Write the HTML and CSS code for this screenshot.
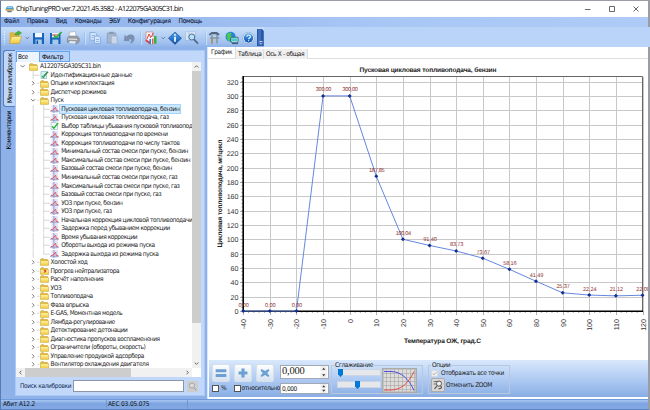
FILE: index.html
```html
<!DOCTYPE html>
<html lang="ru">
<head>
<meta charset="utf-8">
<title>ChipTuningPRO</title>
<link rel="stylesheet" href="styles.css">
</head>
<body>
<svg class="defs" aria-hidden="true">
  <defs>
    <linearGradient id="gold" x1="0" y1="0" x2="0" y2="1"><stop offset="0" stop-color="#fff3a0"/><stop offset="1" stop-color="#f0c83c"/></linearGradient>
    <linearGradient id="sky" x1="0" y1="0" x2="0" y2="1"><stop offset="0" stop-color="#4aa6ee"/><stop offset="1" stop-color="#0b4fb0"/></linearGradient>
    <symbol id="folder" viewBox="0 0 9 8"><path d="M.5 7.3V1.4L1.2.7h2.4l.8.9h3.2v1.2h.9v4.5z" fill="#e5bc43" stroke="#b9912c" stroke-width=".5"/><path d="M.7 7.2V3.1h7.7v4.1z" fill="url(#gold)"/></symbol>
    <symbol id="mark" viewBox="0 0 9 8"><use href="#folder" width="9" height="8"/><path d="M4 3.2l2 2M6 3l-2 2.5" stroke="#e03a28" stroke-width="1.1"/></symbol>
    <symbol id="curve" viewBox="0 0 9 8"><path d="M1.5 0h6.5v8H1.5z" fill="#e3e4f8"/><path d="M3.9 0v8M0 6.2h9" stroke="#8d94c4" stroke-width=".9"/><path d="M1 5.5l2-.3L5.6 2.2l.6 3.1 2 .4" fill="none" stroke="#e0505c" stroke-width=".9"/></symbol>
    <symbol id="check" viewBox="0 0 9 8"><path d="M1 .5h5l1.5 1.4v5.6H1z" fill="#f2f9fc" stroke="#90b2be" stroke-width=".6"/><path d="M2 4.3l1.9 2L8.1 1" fill="none" stroke="#26b33c" stroke-width="1.4"/></symbol>
    <symbol id="note" viewBox="0 0 9 8"><path d="M1 .5h5.5v7H1z" fill="#d9f1f8" stroke="#72aebb" stroke-width=".6"/><path d="M2 5l1.5 1.5L4.7 4" fill="none" stroke="#28a84c" stroke-width="1.2"/><path d="M4 5L8 .7" stroke="#3b8b46" stroke-width="1.6"/></symbol>
  </defs>
</svg>
<div class="window">
  <header class="title">
    <svg class="logo" viewBox="0 0 10 8"><path d="M1 3L3 .6h5L9.6 3v2.7H.8z" fill="#479bd2"/><path d="M2.4 2.6l1-1.3h4l1 1.3z" fill="#b8e2f5"/><path d="M.6 4.2h9v1.5h-9z" fill="#ecb63e"/><path d="M2 6h6l-1 1.5H3z" fill="#777"/></svg>
    <span class="caption">ChipTuningPRO ver.7.2021.45.3582 - A122075GA305C31.bin</span>
    <svg class="controls" viewBox="0 0 56 8"><path d="M1 4.5h5.5M25.5 1.5h5v5h-5zM49.5 1.5l5 5M54.5 1.5l-5 5" fill="none" stroke="#444" stroke-width=".8"/></svg>
  </header>
  <nav class="menu"><span>Файл</span><span>Правка</span><span>Вид</span><span>Команды</span><span>ЭБУ</span><span>Конфигурация</span><span>Помощь</span></nav>
  <div class="toolbar">
    <svg class="tools" viewBox="0 0 265 20">
      <path d="M4.5 3.5v13" stroke="#eff6ff" stroke-dasharray="1 1.5"/>
      <path d="M9.5 14.5V5.3l1-1h3.4l1.3 1.5H19v8.7z" fill="#e0b33d"/><path d="M9.5 15.5l2-7h10l-2.2 7z" fill="url(#gold)" stroke="#ba922b" stroke-width=".5"/><path d="M15 6.8c.2-2 1-2.8 3.2-2.8V2.7L21.5 5l-3.3 2.5V6.2c-1 0-1.6.3-1.6 1z" fill="#49b43a" stroke="#278625" stroke-width=".4"/>
      <path d="M25.7 9.2l1.6 1.6 1.6-1.6" fill="none" stroke="#56657e" stroke-width=".8"/>
      <path d="M33 5h11v11H33z" fill="#1464c0"/><path d="M35 5h7v4.3h-7z" fill="#f5faff"/><path d="M35.5 11.5h6.3V16h-6.3z" fill="#a7cbe9"/><path d="M36.5 12.5h1.6V16h-1.6z" fill="#1456a6"/>
      <path d="M50 5h10.5v11H50z" fill="#1464c0"/><path d="M52 5h6.8v4.4H52z" fill="#f8eeee"/><path d="M52.4 11.6h6V16h-6z" fill="#a7cbe9"/><path d="M52 7h6" stroke="#d24848"/><path d="M54 7.2l2 2.6L61.6 4" fill="none" stroke="#28ac32" stroke-width="1.6"/>
      <path d="M69.3 9V4.3l6-.8 1 5.5z" fill="#fff" stroke="#9399a2" stroke-width=".5"/><path d="M67.4 10l2-2h7.8l2 2.2v3.6l-2.5 2-9.3-1.5z" fill="#999da6" stroke="#70757e" stroke-width=".5"/><path d="M68 11l9 .4" stroke="#ececf0"/><path d="M70 13l6 .5-1 2.2-6-.7z" fill="#e4edf6"/>
      <path d="M85 3v14M141 3v14M206 3v14" stroke="#7faae0" stroke-width=".6"/><path d="M85.6 3v14M141.6 3v14M206.6 3v14" stroke="#eef6ff" stroke-width=".6"/>
      <g fill="#d7e7fb" stroke="#78a2da" stroke-width=".8"><path d="M90 4.5h5l1.7 1.7v6H90z"/><path d="M94.4 8h4.2l1.8 1.8v5.7h-6z"/></g><path d="M91.5 7.5h3.5M91.5 9.5h2M96 11.5h3M96 13.5h3" stroke="#82a9dd" stroke-width=".8"/>
      <path d="M107.3 5h8.5v10h-8.5z" fill="#a5b7ce" stroke="#8797b1" stroke-width=".7"/><path d="M109.3 3.8h4.4v2.1h-4.4z" fill="#8797ad"/><path d="M111.3 8h5.8v7.8h-5.8z" fill="#cbd8ea" stroke="#8da3c4" stroke-width=".5"/>
      <path d="M124 13l.6-6.3 2 1.9c3.3-3.6 8.4-2 7.9 2.1-.3 2.8-2.2 4.6-4.8 4.9 3-3.3 1.4-5.6-1-3.6l1.6 1.2z" fill="#7b8fae"/>
      <path d="M146 4h7v9.5h-7z" fill="#faf4f5" stroke="#cb6e74" stroke-width=".6"/><path d="M147 11l2-5 2 4 2-5" fill="none" stroke="#dd3f41"/><path d="M146 12l4 3.5h3" fill="none" stroke="#e33d3b" stroke-width="1.7"/><path d="M151 9h2.8v7H151z" fill="#fff"/><path d="M152.2 10.4h1.2V16h-1.2z" fill="#da3232"/><path d="M154 8h2.5v7.8H154z" fill="#36b33c"/><path d="M149.4 11h1.7v4.8h-1.7z" fill="#2d83d0"/>
      <path d="M161.6 9.2l1.6 1.6 1.6-1.6" fill="none" stroke="#56657e" stroke-width=".8"/>
      <path d="M175 4l6.5 6.2-6.5 6.2-6.5-6.2z" fill="url(#sky)" stroke="#1a437a" stroke-width=".6"/><path d="M175 6.2v1.6M175 8.8v5" stroke="#fff" stroke-width="1.7"/>
      <path d="M185.5 4h10v8h-10z" fill="#eef5fc" stroke="#8aabd2" stroke-width=".5"/><path d="M186 6h9M186 8h9M186 10h9M189 4v8" stroke="#91b0d2" stroke-width=".5"/><circle cx="191.8" cy="9" r="3" fill="#bce2f8" stroke="#49719f" stroke-width="1"/><path d="M194 11.4l4 4.3" stroke="#50688a" stroke-width="1.8"/>
      <path d="M208.7 6.3l3-2.2h5.2l2.8 2.2-1.3 1.2-2.5-1.3h-4l-2.2 1.4z" fill="#50657c"/><path d="M210 10h9.5M212 7v8.5M217 7v8.5" stroke="#8494a4" stroke-width="1.5"/><path d="M212 10v5.5" stroke="#c18a45" stroke-width="1.5"/>
      <circle cx="230.6" cy="8.8" r="5" fill="#2684d8"/><path d="M226.5 7l2.3-2.6 3 .8-1.2 2.2 2.2 1.8-2.7 1.6-.4 2.5-2-.5z" fill="#4cc951"/><path d="M231 9.3h7v5h-7z" fill="#e0f6f7" stroke="#245275" stroke-width=".8"/><path d="M232 10.3h5v3h-5z" fill="#3ed1c4"/><path d="M232 15.6h6" stroke="#35536e"/>
      <circle cx="248.5" cy="10" r="5.7" fill="#fff" stroke="#6f99c4" stroke-width=".6"/><circle cx="248.5" cy="10" r="4.7" fill="url(#sky)"/><path d="M246.8 8.8c0-2.5 3.6-2.3 3.6-.1 0 1.4-1.8 1.3-1.8 2.6M248.6 12.2v1.1" fill="none" stroke="#fff" stroke-width="1.1"/>
      <path d="M257 1h5l1.8 2v15H257z" fill="#2a58a8"/><path d="M258 1h3v16h-3z" fill="#416fc0"/><path d="M259.5 13.5h3M259.8 15l1.3 1.2 1.3-1.2" fill="none" stroke="#fff" stroke-width=".7"/>
    </svg>
  </div>
  <main class="workspace">
    <aside class="side">
      <div class="rail"><div class="rtab on"><span>Меню калибровок</span></div><div class="rtab"><span>Комментарии</span></div></div>
      <section class="panel">
        <div class="ptabs"><span>Все</span><span class="sel">Фильтр</span></div>
        <div class="treebox">
          <div class="treerow"><div class="tree" id="tree"></div>
            <div class="vbar"><svg viewBox="0 0 9 9"><path d="M2.7 5.5l1.8-1.8 1.8 1.8"/></svg><i></i><svg viewBox="0 0 9 9"><path d="M2.7 3.5l1.8 1.8 1.8-1.8"/></svg></div>
          </div>
          <div class="hbar"><svg viewBox="0 0 9 9"><path d="M5.5 2.7L3.7 4.5l1.8 1.8"/></svg><i></i><svg viewBox="0 0 9 9"><path d="M3.5 2.7l1.8 1.8-1.8 1.8"/></svg></div>
        </div>
        <div class="search"><label>Поиск калибровки</label><div class="input"></div><div class="find"><svg viewBox="0 0 11 11"><circle cx="5" cy="4.6" r="2.5" fill="#ddd" stroke="#999" stroke-width=".8"/><path d="M6.8 6.5l2.4 2.8" stroke="#999"/></svg></div></div>
      </section>
    </aside>
    <section class="content">
      <div class="ctabs"><span class="on">График</span><span>Таблица</span><span class="axis">Ось X - общая</span></div>
      <svg class="chart" id="chart" viewBox="207 60 441 300"></svg>
      <div class="editor">
        <div class="ops">
          <div class="btns">
            <div class="op"><svg viewBox="0 0 18 18"><path d="M3 4.8h12v3.4H3zM3 10.2h12v3.4H3z"/></svg></div>
            <div class="op"><svg viewBox="0 0 18 18"><path d="M7.2 4h3.6v3.4H14v3.4h-3.2V14H7.2v-3.2H4V7.4h3.2z"/></svg></div>
            <div class="op"><svg viewBox="0 0 18 18"><path d="M5 4.5l4 2.3 4-2.3 1 1.6L11.5 9l2.5 3-1 1.6-4-2.3-4 2.3L4 12l2.5-3L4 6.1z"/></svg></div>
          </div>
          <div class="checks"><i class="box"></i><span class="pct">%</span><i class="box"></i><span class="rel">относительно</span></div>
        </div>
        <div class="spins">
          <div class="spin big"><span>0,000</span><svg viewBox="0 0 8 13"><path d="M0 0h7v6H0zM0 7h7v6H0z" fill="#eee"/><path d="M2 4l1.7-2L5.4 4zM2 9l1.7 2L5.4 9z" fill="#333"/></svg></div>
          <div class="spin"><span>0,000</span><svg viewBox="0 0 8 10"><path d="M0 0h7v4.5H0zM0 5.2h7V10H0z" fill="#eee"/><path d="M2 3.5l1.7-2 1.7 2zM2 6.5l1.7 2 1.7-2z" fill="#333"/></svg></div>
        </div>
        <fieldset class="smooth"><legend>Сглаживание</legend>
          <div class="sliders"><div class="slider"><i></i></div><div class="slider mid"><i></i></div></div>
          <svg class="preview" viewBox="0 0 35 25"><path d="M0 0h35v25H0z" fill="#aaa"/><path d="M1.5 1.5h32v22h-32z" fill="#deddda"/><path d="M4.5 1.5v22M8.5 1.5v22M12.5 1.5v22M16.5 1.5v22M20.5 1.5v22M24.5 1.5v22M28.5 1.5v22M32.5 1.5v22M1.5 5.5h32M1.5 9.5h32M1.5 13.5h32M1.5 17.5h32M1.5 21.5h32" stroke="#a5a5a5" stroke-width=".6"/><path d="M2 3.5h7C19 3.5 27 11 32 22.5" fill="none" stroke="#4b4bdf"/><path d="M2 22h6C19 22 26 16 32 3.5" fill="none" stroke="#e34b4b"/></svg>
        </fieldset>
        <fieldset class="options"><legend>Опции</legend>
          <div class="opt"><svg class="tick" viewBox="0 0 7 7"><path d="M.3.3h6.4v6.4H.3z" fill="#eee" stroke="#ccc" stroke-width=".6"/><path d="M1.5 3.5L3 5l2.6-3.2" fill="none" stroke="#aaa" stroke-width=".8"/></svg><span>Отображать все точки</span></div>
          <div class="opt"><svg class="zoom" viewBox="0 0 14 14"><rect x=".5" y=".5" width="13" height="13" rx="1.5" fill="#d9d8d6" stroke="#aaa"/><path d="M2.5 3.5h5M2.5 6h3" stroke="#777"/><circle cx="8" cy="5.6" r="2.6" fill="#eee" stroke="#555"/><path d="M6 7.8L3.5 11M9.5 8.2c2 1 1 2.5-2 2.6" fill="none" stroke="#555" stroke-width="1.2"/></svg><span>Отменить ZOOM</span></div>
        </fieldset>
      </div>
    </section>
  </main>
  <footer class="status"><span>Абит A12.2</span><span>АЕС 03.05.075</span><span></span></footer>
</div>
<script src="app.js"></script>
</body>
</html>
```
FILE: styles.css
```css
* { box-sizing: border-box; }
body { margin: 0; overflow: hidden; font: 6.5px/8px "DejaVu Sans Condensed", "DejaVu Sans", sans-serif; font-stretch: condensed; letter-spacing: -.35px; color: #1a1a1a; text-rendering: geometricPrecision; }
svg { display: block; }
i { display: block; }
.defs { position: absolute; width: 0; height: 0; }
.window { width: 650px; height: 410px; display: flex; flex-direction: column; border: solid #9a9da3; border-width: 1px 2px 1px 1px; border-left-color: #587bb2; border-bottom-color: #5c84c4; background: #8caee6; }
.title { height: 16px; display: flex; align-items: center; background: #fff; padding: 0 8px 0 4px; }
.logo { width: 9px; height: 8px; }
.caption { margin-left: 2px; font: 7.1px/14px "Open Sans", sans-serif; letter-spacing: -.57px; color: #000; white-space: nowrap; }
.controls { width: 56px; height: 8px; margin-left: auto; }
.menu { height: 9.5px; display: flex; gap: 7.7px; padding-left: 3px; background: linear-gradient(90deg, #8eb0ea, #a9c7f5 60%, #aecbf7); line-height: 9px; letter-spacing: -.21px; color: #101c36; -webkit-text-stroke: .1px #101c36; }
.toolbar { height: 20.5px; border-top: 1px solid #c6dbf9; background: linear-gradient(#c8def9, #9fc0ef 80%, #8eb2e8); width: 263px; box-shadow: 400px 0 #bad4f9, 200px 0 #bad4f9; }
.tools { width: 265px; height: 20px; margin-left: -1px; }
.workspace { height: 352px; display: flex; }
.side { width: 206px; display: flex; padding: 3px 2px 0 2px; background: #8eb1e9; }
.rail { width: 12px; }
.rtab { height: 47px; width: 12px; display: flex; align-items: center; justify-content: center; }
.rtab.on { height: 57px; background: #bfd7fa; border: 1px solid #537fbd; border-right: 0; border-radius: 3px 0 0 3px; }
.rtab span { writing-mode: vertical-rl; transform: rotate(180deg); white-space: nowrap; color: #000; }
.panel { width: 190px; height: 346px; border: 1px solid #a9c9f8; background: #c1d8fa; }
.ptabs { display: flex; height: 11px; }
.ptabs span { width: 23px; padding-left: 1px; line-height: 11px; background: #edf4fd; border: 0 solid #62a4ed; border-width: 1px 0 0 1px; color: #000; }
.ptabs .sel { width: 31px; padding-left: 2px; background: #b7d2f8; border-width: 1px; }
.treebox { width: 185px; height: 315px; background: #fff; }
.treerow { height: 306px; display: flex; overflow: hidden; }
.tree { width: 176px; height: 306px; padding-top: .3px; overflow: hidden; letter-spacing: -.42px; }
.row { height: 8.53px; display: flex; align-items: center; white-space: nowrap; }
.row .guide { flex: none; height: 8.53px; }
.row .icon { flex: none; width: 9px; height: 8px; }
.row span { padding: 0 1px; margin-left: 1px; line-height: 8.5px; }
.row.selected span { background: #cce8ff; outline: .5px solid #a5d5fb; }
.vbar { width: 9px; background: #f1f1f1; display: flex; flex-direction: column; }
.vbar svg, .hbar svg { width: 9px; height: 9px; flex: none; }
.vbar path, .hbar path { fill: none; stroke: #555; stroke-width: .9; }
.vbar i { height: 252px; margin-bottom: auto; background: #cdcdcd; }
.hbar { width: 176px; height: 9px; background: #f1f1f1; display: flex; }
.hbar i { width: 106px; margin-right: auto; background: #cdcdcd; }
.search { display: flex; align-items: center; height: 18px; padding-left: 4px; color: #122a55; }
.search label { width: 53px; white-space: nowrap; }
.input { width: 111px; height: 12px; background: #fff; border: 1px solid #8a96a8; }
.find { width: 11px; height: 11px; margin-left: 3px; background: #cdcdcd; }
.content { width: 441px; height: 352px; background: #fff; border-left: 1px solid #d9e7fb; }
.ctabs { display: flex; height: 12px; padding-left: 1px; border-bottom: 1px solid #ddd; }
.ctabs span { width: 28px; height: 10px; margin-top: 1.5px; padding-left: 2px; background: #f0f0f0; border-right: 1px solid #ddd; line-height: 10px; white-space: nowrap; }
.ctabs .on { width: 27px; height: 11px; margin-top: 0; background: #fff; }
.ctabs .axis { width: 44px; }
.chart { width: 441px; height: 300px; margin: 1px 0 0 -1px; }
.editor { height: 37px; margin-left: 1px; display: flex; background: linear-gradient(#d9e8fc, #a9c6f1 60%, #89ade4); }
.ops { width: 71px; padding: 4px 0 0 3px; }
.btns { display: flex; gap: 4px; }
.op { width: 18px; height: 18px; border: 1px solid #d7dfe9; border-radius: 2px; background: linear-gradient(#fdfefe, #d6e2f1); }
.op svg { width: 16px; height: 16px; fill: #6da0d2; }
.checks { display: flex; align-items: center; margin-top: 2px; height: 8px; }
.box { width: 7px; height: 7px; flex: none; background: #fff; border: 1px solid #555; }
.pct { width: 15px; padding-left: 2px; }
.rel { padding-left: 1px; letter-spacing: -.38px; }
.spins { width: 49px; padding-top: 5px; }
.spin { width: 49px; height: 11px; display: flex; align-items: center; justify-content: space-between; background: #fff; border: 1px solid #a2a9b4; padding-left: 1px; }
.spin svg { width: 8px; height: 9px; }
.spin.big { height: 14px; margin-bottom: 4px; font: 10.5px/12px "Liberation Serif", serif; letter-spacing: -.2px; }
.spin.big svg { height: 12px; }
fieldset { margin: 1px 0 0 2px; padding: 0; height: 33px; border: 1px solid #b9c7dc; min-width: 0; }
legend { padding: 0 1px; margin-left: 2px; height: 8px; line-height: 8px; }
.smooth { width: 92px; display: flex; }
.sliders { width: 50px; padding: 0 0 0 5px; }
.slider { width: 44px; height: 7px; background: #e5e7eb; border: 1px solid #cbd5e3; margin-bottom: 5px; }
.slider i { width: 5px; height: 8px; margin-top: -1px; background: #0078d7; clip-path: polygon(0 0, 100% 0, 100% 70%, 50% 100%, 0 70%); }
.slider.mid i { margin-left: 17px; }
.preview { width: 35px; height: 25px; margin-top: -1px; margin-left: 0; }
.options { width: 82px; margin-left: 5px; }
.opt { display: flex; align-items: center; height: 8px; padding-left: 2px; white-space: nowrap; }
.opt + .opt { height: 14px; margin-top: 1px; }
.opt span { margin-left: 3px; }
.tick { flex: none; width: 7px; height: 7px; }
.zoom { flex: none; width: 14px; height: 14px; }
.opt .zoom + span { margin-left: 1px; }
.status { height: 9px; flex: 1; display: flex; background: linear-gradient(#a8c7f3, #7da4e0 40%, #84aae5); border-top: 1px solid #6e9bdc; line-height: 9px; color: #111; letter-spacing: -.15px; }
.status span { padding-left: 2px; width: 106px; border-right: 1px solid #6f98d5; white-space: nowrap; }
.status span + span { width: 81px; padding-left: 1px; }
.status span:last-child { border: 0; }
.chart text { font-family: "Liberation Sans", Arial, sans-serif; letter-spacing: 0; }
.grid { stroke: #c8c8c8; stroke-width: 1; }
.tickmark { stroke: #777; stroke-width: .6; }
.frame { fill: none; stroke: #666; stroke-width: 1; }
.axes { fill: none; stroke: #000; stroke-width: 1.6; }
.line { fill: none; stroke: #6687e0; stroke-width: 1; }
.dot { fill: #102f91; }
.chart .num { font-size: 7.1px; fill: #333; }
.chart .value { font-size: 5.6px; fill: #8d3030; text-anchor: middle; }
.chart .heading { font-size: 6.6px; font-weight: bold; fill: #222; text-anchor: middle; }
```
FILE: app.js
```js
const rows = [
  [0, 'folder', 'A122075GA305C31.bin', 'v'],
  [1, 'note', 'Идентификационные данные'],
  [1, 'folder', 'Опции и комплектация', '>'],
  [1, 'folder', 'Диспетчер режимов', '>'],
  [1, 'folder', 'Пуск', 'v'],
  [2, 'curve', 'Пусковая цикловая топливоподача, бензин'],
  [2, 'curve', 'Пусковая цикловая топливоподача, газ'],
  [2, 'check', 'Выбор таблицы убывания пусковой топливопод'],
  [2, 'curve', 'Коррекция топливоподачи по времени'],
  [2, 'curve', 'Коррекция топливоподачи по числу тактов'],
  [2, 'curve', 'Минимальный состав смеси при пуске, бензин'],
  [2, 'curve', 'Максимальный состав смеси при пуске, бензин'],
  [2, 'curve', 'Базовый состав смеси при пуске, бензин'],
  [2, 'curve', 'Минимальный состав смеси при пуске, газ'],
  [2, 'curve', 'Максимальный состав смеси при пуске, газ'],
  [2, 'curve', 'Базовый состав смеси при пуске, газ'],
  [2, 'curve', 'УОЗ при пуске, бензин'],
  [2, 'curve', 'УОЗ при пуске, газ'],
  [2, 'curve', 'Начальная коррекция цикловой топливоподачи'],
  [2, 'curve', 'Задержка перед убыванием коррекции'],
  [2, 'curve', 'Время убывания коррекции'],
  [2, 'curve', 'Обороты выхода из режима пуска'],
  [2, 'curve', 'Задержка выхода из режима пуска'],
  [1, 'folder', 'Холостой ход', '>'],
  [1, 'mark', 'Прогрев нейтрализатора', '>'],
  [1, 'folder', 'Расчёт наполнения', '>'],
  [1, 'folder', 'УОЗ', '>'],
  [1, 'folder', 'Топливоподача', '>'],
  [1, 'folder', 'Фаза впрыска', '>'],
  [1, 'folder', 'E-GAS, Моментная модель', '>'],
  [1, 'folder', 'Лямбда-регулирование', '>'],
  [1, 'folder', 'Детектирование детонации', '>'],
  [1, 'folder', 'Диагностика пропусков воспламенения', '>'],
  [1, 'folder', 'Ограничители (обороты, скорость)', '>'],
  [1, 'folder', 'Управление продувкой адсорбера', '>'],
  [1, 'folder', 'Вентилятор охлаждения двигателя', '>']
];
document.getElementById('tree').innerHTML = rows.map(([level, icon, label, arrow], i) => {
  const w = 13 + level * 10.6, x = 6.6 + level * 10.6;
  let d = '';
  if (level > 0) d += (arrow ? `M${x + 4} 4.3H${w}` : `M${x} 4.3H${w}`);
  if (level > 0 && !arrow) d += `M${x} 0V${i === 22 ? 4.3 : 8.6}`;
  if (level === 2) d += 'M17.2 0V8.6';
  const a = arrow === 'v' ? `M${x - 2} 3.2l2 2 2-2` : arrow ? `M${x - 1} 2.3l2 2-2 2` : '';
  return `<div class="row${i === 5 ? ' selected' : ''}"><svg class="guide" style="width:${w}px" viewBox="0 0 ${w} 8.6"><path d="${d}" stroke="#bbb" stroke-width=".6"/><path d="${a}" fill="none" stroke="#555" stroke-width=".8"/></svg><svg class="icon"><use href="#${icon}"/></svg><span>${label}</span></div>`;
}).join('');

const temps = [-40, -30, -20, -10, 0, 10, 20, 30, 40, 50, 60, 80, 90, 100, 110, 120];
const fuel = [0, 0, 0, 300, 300, 187.85, 100.04, 91.4, 83.73, 73.67, 58.16, 41.49, 25.37, 22.24, 21.12, 22];
const px = i => +(243.2 + i * 26.62).toFixed(2);
const py = v => +(311 - v * 0.717).toFixed(2);
let s = '';
for (let v = 0; v <= 320; v += 20) {
  const y = Math.round(py(v)) + .5;
  s += `<path class="grid" d="M243 ${y}H642"/><path class="tickmark" d="M240 ${y}h3"/><text class="num" text-anchor="end" x="238.5" y="${y + 2.2}">${v}</text>`;
}
for (let v = 0; v <= 325; v += 5) s += `<path class="tickmark" d="M241.3 ${py(v)}h1.5"/>`;
temps.forEach((t, i) => {
  const x = Math.round(px(i)) + .5;
  s += `<path class="grid" d="M${x} 77V311"/><path class="tickmark" d="M${x} 311v4"/><text class="num" text-anchor="end" transform="translate(${x + 2.5} 319) rotate(-90)">${t}</text>`;
  if (i < 15) for (let k = 1; k < 5; k++) s += `<path class="tickmark" d="M${px(i) + k * 5.32} 311v2"/>`;
});
s += '<path class="frame" d="M243 76.5H642.5V311"/><path class="axes" d="M243.2 76V311.2H643"/>';
s += `<polyline class="line" points="${fuel.map((v, i) => px(i) + ',' + py(v)).join(' ')}"/>`;
fuel.forEach((v, i) => {
  const x = px(i), y = py(v);
  s += `<path class="dot" d="M${x - 2} ${y}l2-2 2 2-2 2z"/><text class="value" x="${x + .5}" y="${y - 4.5}" textLength="${v >= 100 ? 15.5 : v ? 13.5 : 10.5}">${v.toFixed(2).replace('.', ',')}</text>`;
});
s += '<text class="heading" x="428" y="71.5" textLength="137">Пусковая цикловая топливоподача, бензин</text>';
s += '<text class="heading" x="442.5" y="342.5" textLength="77">Температура ОЖ, град.С</text>';
s += '<text class="heading" transform="translate(221.5 193.5) rotate(-90)" textLength="108">Цикловая топливоподача, мг/цикл</text>';
document.getElementById('chart').innerHTML = s;
```
